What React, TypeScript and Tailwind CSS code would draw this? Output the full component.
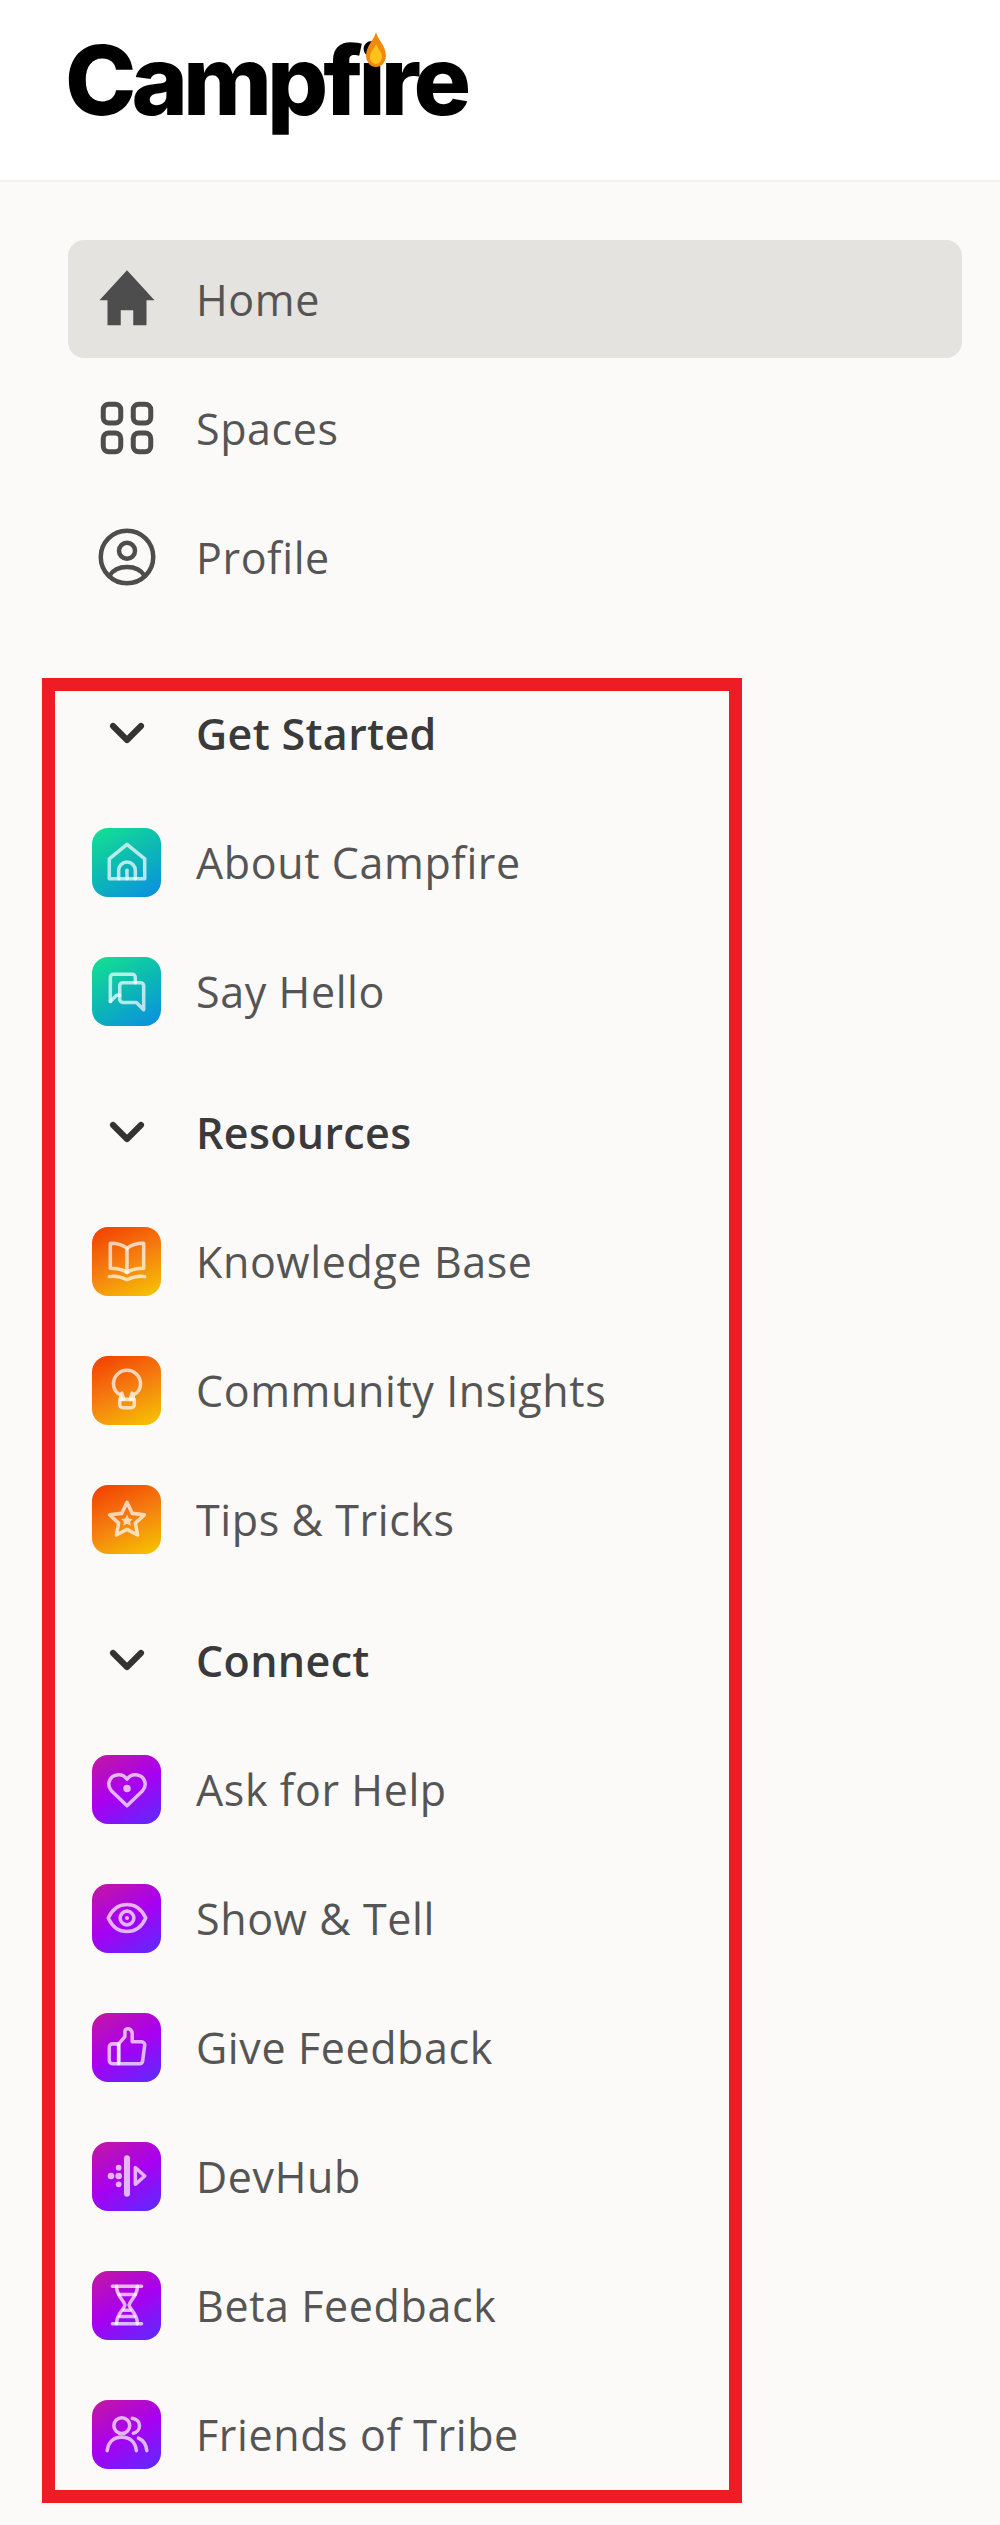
import React from "react";
import { ChevronDown } from "lucide-react";

type Tone = "teal" | "orange" | "purple";

const toneClass: Record<Tone, string> = {
  teal: "bg-[linear-gradient(150deg,#14e291_0%,#0cb8b4_50%,#0a8de4_100%)]",
  orange: "bg-[linear-gradient(155deg,#f23c00_0%,#f57f10_50%,#f5c800_100%)]",
  purple: "bg-[linear-gradient(150deg,#c4189f_0%,#a800f0_50%,#5a2cff_100%)]",
};

// glyphs that sit inside the gradient tiles, all on a 24 grid
const glyphs: Record<string, React.ReactNode> = {
  house: (
    <>
      <path d="M3.500 20v-9.500L12 3.500l8.500 7V20z" />
      <path d="M8 20v-4a4 4 0 0 1 8 0v4" />
      <path d="M12 16v4" />
    </>
  ),
  chat: (
    <>
      <path d="M4 17V5.500A1.500 1.500 0 0 1 5.500 4h9A1.500 1.500 0 0 1 16 5.500V8" />
      <path d="M4 17l3-3h1.500" />
      <path d="M8.500 9.500A1.500 1.500 0 0 1 10 8h8.500A1.500 1.500 0 0 1 20 9.500V21l-3.500-3.500H10a1.500 1.500 0 0 1-1.500-1.500z" />
    </>
  ),
  book: (
    <>
      <path d="M12 6C10 4 7 3.500 4 3.500v12c3 0 6 .5 8 2 2-1.500 5-2 8-2v-12c-3 0-6 .5-8 2.500z" />
      <path d="M12 6v11.500" />
      <path d="M3.500 19.500c3-.5 5.500 0 8.500 1.500 3-1.500 5.500-2 8.500-1.500" />
    </>
  ),
  bulb: (
    <>
      <path d="M9 16.500v-2C7 13.500 5.500 11.500 5.500 9a6.500 6.500 0 0 1 13 0c0 2.500-1.500 4.500-3.500 5.500v2" />
      <path d="M8.500 16.500h7v2.500a1.500 1.500 0 0 1-1.500 1.500h-4A1.500 1.500 0 0 1 8.500 19z" />
      <path d="M10.500 16.500l-1-3M13.500 16.500l1-3" />
    </>
  ),
  star: (
    <>
      <path d="M12 4l2.500 5.300 5.800.7-4.300 4 1.100 5.700L12 17l-5.100 2.700L8 14 3.700 10l5.800-.7z" />
      <path d="M12 10l.9 1.700 1.900.3-1.300 1.300.3 1.900-1.800-.9-1.800.9.3-1.900L9.200 12l1.900-.3z" fill="currentColor" stroke="none" />
    </>
  ),
  heart: (
    <>
      <path d="M12 20L4.500 12.800C2.500 10.600 3 6.800 6 5.600c2.300-.9 4.600-.2 6 1.700 1.400-1.900 3.700-2.600 6-1.700 3 1.200 3.500 5 1.500 7.200z" />
      <circle cx="12" cy="11.800" r="1.800" fill="currentColor" stroke="none" />
    </>
  ),
  eye: (
    <>
      <path d="M3 12c2-4.500 5-6.500 9-6.500s7 2 9 6.500c-2 4.500-5 6.500-9 6.500S5 16.500 3 12z" />
      <circle cx="12" cy="12" r="3.300" />
      <circle cx="12" cy="12" r="1" fill="currentColor" stroke="none" />
    </>
  ),
  thumb: (
    <>
      <path d="M8 10.500l3-3.500V4.500C11 3.500 12 3 13 3.300c1 .4 1.500 1.400 1.500 2.400V9.500h4.500a1.500 1.500 0 0 1 1.500 1.700l-1 7.500a1.500 1.500 0 0 1-1.500 1.300H8z" />
      <path d="M8 10.500H5a1.500 1.500 0 0 0-1.500 1.500v6.500A1.500 1.500 0 0 0 5 20h3z" />
    </>
  ),
  wave: (
    <>
      <path d="M12 3.500v17" strokeWidth="2.900" />
      <path d="M16 8v8l4.500-4z" />
      <circle cx="8" cy="8" r="1.400" fill="currentColor" stroke="none" />
      <circle cx="8" cy="12" r="1.600" fill="currentColor" stroke="none" />
      <circle cx="8" cy="16" r="1.400" fill="currentColor" stroke="none" />
      <circle cx="4.300" cy="12" r="1.600" fill="currentColor" stroke="none" />
    </>
  ),
  hourglass: (
    <>
      <path d="M5 3h14M5 21h14" />
      <path d="M7 3c0 5 3.500 6.500 4 9-.5 2.500-4 4-4 9M17 3c0 5-3.500 6.500-4 9 .5 2.500 4 4 4 9" />
      <path d="M8 7h8M8.500 17.500h7M10.500 14.500h3" />
    </>
  ),
  users: (
    <>
      <circle cx="9.500" cy="8" r="3.800" />
      <path d="M2.500 20c.5-4.500 3.500-6.500 7-6.500s6.500 2 7 6.500" />
      <path d="M14.500 4.500c2.200.2 3.500 1.700 3.500 3.500s-1.300 3.300-3 3.600" />
      <path d="M17.500 14c2.300 1 3.700 3 4 6" />
    </>
  ),
};

function Tile({ tone, glyph }: { tone: Tone; glyph: string }) {
  return (
    <div className={`flex h-[69px] w-[69px] shrink-0 items-center justify-center rounded-[16px] ${toneClass[tone]}`}>
      <svg
        viewBox="0 0 24 24"
        className="h-[50px] w-[50px] text-white/70"
        fill="none"
        stroke="currentColor"
        strokeWidth="1.700"
        strokeLinecap="round"
        strokeLinejoin="round"
      >
        {glyphs[glyph]}
      </svg>
    </div>
  );
}

function Row({ icon, label, active }: { icon: React.ReactNode; label: string; active?: boolean }) {
  return (
    <div className={`flex h-[118px] items-center gap-[35px] rounded-[16px] pl-6 ${active ? "bg-[#e4e3e0]" : ""}`}>
      <div className="flex w-[69px] shrink-0 items-center justify-center">{icon}</div>
      <span className="pt-[3px] text-[43px] tracking-[0.014em] text-[#555555]">{label}</span>
    </div>
  );
}

function Section({ title, tone, items }: { title: string; tone: Tone; items: [string, string][] }) {
  return (
    <div className="flex flex-col gap-[11px]">
      <div className="flex h-[118px] items-center gap-[35px] pl-6">
        <div className="flex w-[69px] shrink-0 items-center justify-center">
          <ChevronDown className="h-[56px] w-[56px] text-[#333333]" strokeWidth={2.6} />
        </div>
        <span className="pt-[3px] text-[43px] font-semibold tracking-[0.008em] text-[#3a3a3a]">{title}</span>
      </div>
      {items.map(([label, glyph]) => (
        <Row key={label} label={label} icon={<Tile tone={tone} glyph={glyph} />} />
      ))}
    </div>
  );
}

export default function App() {
  return (
    <div className="relative min-h-[2525px] bg-[#fbfaf8] font-['Open_Sans',sans-serif]">
      <header className="flex h-[182px] items-center border-b-2 border-[#f2f1ee] bg-white pb-[20px] pl-[65px]">
        <span className="relative font-['Inter',sans-serif] text-[96px] leading-none font-extrabold tracking-[-0.052em] text-black">
          Campfire
          {/* flame on the i */}
          <svg viewBox="0 0 22 36" className="absolute top-[0px] left-[300px] h-[36px] w-[22px]">
            <path d="M11 0C13 8 21 14 21 24a10 11 0 0 1-20 0C1 14 9 8 11 0z" fill="#f08a0c" />
            <path d="M11 12c2 5 6 8 6 13a6 7 0 0 1-12 0c0-5 4-8 6-13z" fill="#ffc21a" />
          </svg>
        </span>
      </header>

      <nav className="flex flex-col pt-[58px] pr-[38px] pl-[68px]">
        <div className="flex flex-col gap-[11px]">
          <Row
            active
            label="Home"
            icon={
              <svg viewBox="0 0 24 24" className="h-[60px] w-[60px] text-[#4d4d4d]" fill="currentColor">
                <path d="M12 .5L1 12.500H4.200V22.500H9.500V16.500H14.500V22.500H19.800V12.500H23z" />
              </svg>
            }
          />
          <Row
            label="Spaces"
            icon={
              <svg viewBox="0 0 24 24" className="h-[60px] w-[60px] text-[#4d4d4d]" fill="none" stroke="currentColor" strokeWidth="2">
                <rect x="2.500" y="2.500" width="7" height="7.500" rx="2.200" />
                <rect x="14.500" y="2.500" width="7" height="7.500" rx="2.200" />
                <rect x="2.500" y="14" width="7" height="7.500" rx="2.200" />
                <rect x="14.500" y="14" width="7" height="7.500" rx="2.200" />
              </svg>
            }
          />
          <Row
            label="Profile"
            icon={
              <svg viewBox="0 0 24 24" className="h-[60px] w-[60px] text-[#4d4d4d]" fill="none" stroke="currentColor" strokeWidth="1.800">
                <circle cx="12" cy="12" r="10.500" />
                <circle cx="12" cy="9.500" r="3.200" />
                <path d="M5 19.500c1.500-2.500 4-3.500 7-3.500s5.500 1 7 3.500" />
              </svg>
            }
          />
        </div>

        <div className="mt-[58px] flex flex-col gap-[23px]">
          <Section
            title="Get Started"
            tone="teal"
            items={[
              ["About Campfire", "house"],
              ["Say Hello", "chat"],
            ]}
          />
          <Section
            title="Resources"
            tone="orange"
            items={[
              ["Knowledge Base", "book"],
              ["Community Insights", "bulb"],
              ["Tips & Tricks", "star"],
            ]}
          />
          <Section
            title="Connect"
            tone="purple"
            items={[
              ["Ask for Help", "heart"],
              ["Show & Tell", "eye"],
              ["Give Feedback", "thumb"],
              ["DevHub", "wave"],
              ["Beta Feedback", "hourglass"],
              ["Friends of Tribe", "users"],
            ]}
          />
        </div>
      </nav>

      {/* red annotation frame drawn over the list */}
      <div className="pointer-events-none absolute top-[678px] left-[42px] h-[1825px] w-[700px] border-[13px] border-[#ee1c25]" />
    </div>
  );
}
